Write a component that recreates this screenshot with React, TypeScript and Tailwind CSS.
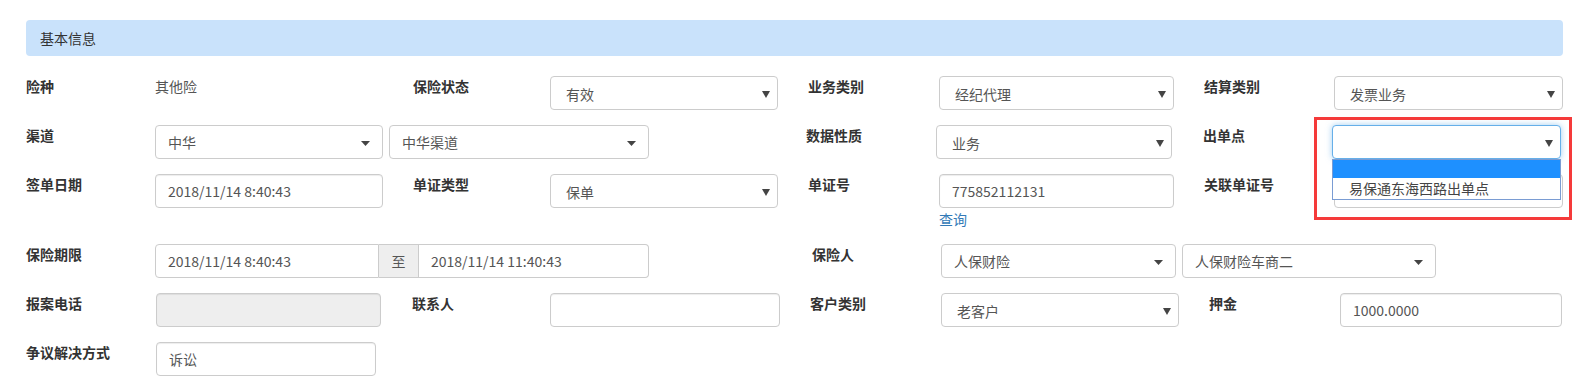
import React from 'react';

const font = { fontFamily: '"Noto Sans CJK SC", "Open Sans", sans-serif' };

function Label({ text, className = '' }: { text: string; className?: string }) {
  return <div className={`shrink-0 text-[14px] leading-[20px] font-bold text-[#333] ${className}`}>{text}</div>;
}

function NativeArrow() {
  return (
    <svg width="8" height="7" viewBox="0 0 8 7" className="absolute right-[7px] top-[14px]">
      <path d="M0 0 L8 0 L4 7 Z" fill="#444" />
    </svg>
  );
}

function Caret() {
  return (
    <svg width="9" height="5" viewBox="0 0 9 5" className="absolute right-[12px] top-[15px]">
      <path d="M0 0 L9 0 L4.5 5 Z" fill="#444" />
    </svg>
  );
}

function Select({ value, className = '', caret = false }: { value: string; className?: string; caret?: boolean }) {
  return (
    <div className={`relative shrink-0 h-[34px] rounded-[4px] border border-[#ccc] bg-white flex items-center text-[14px] text-[#555] ${caret ? 'pl-[12px]' : 'pl-[15px] pt-[2px]'} ${className}`}>
      <span>{value}</span>
      {caret ? <Caret /> : <NativeArrow />}
    </div>
  );
}

function Input({ value = '', className = '', disabled = false }: { value?: string; className?: string; disabled?: boolean }) {
  return (
    <div className={`shrink-0 h-[34px] rounded-[4px] border border-[#ccc] flex items-center pl-[12px] text-[14px] text-[#555] shadow-[inset_0_1px_1px_rgba(0,0,0,0.075)] ${disabled ? 'bg-[#eee]' : 'bg-white'} ${className}`}>
      {value}
    </div>
  );
}

export default function App() {
  return (
    <div className="w-[1589px] h-[386px] bg-white pt-[20px] pl-[26px] overflow-hidden" style={font}>
      <div className="w-[1537px] h-[36px] rounded-[4px] bg-[#c9e2fb] flex items-center pl-[14px] text-[14px] text-[#333]">基本信息</div>

      <div className="flex flex-col gap-[15px] mt-[20px]">
        {/* row 1 */}
        <div className="flex items-start h-[34px]">
          <Label text="险种" className="w-[129px]" />
          <div className="w-[258px] shrink-0 text-[14px] leading-[20px] text-[#555]">其他险</div>
          <Label text="保险状态" className="w-[137px]" />
          <Select value="有效" className="w-[228px]" />
          <Label text="业务类别" className="w-[131px] ml-[30px]" />
          <Select value="经纪代理" className="w-[235px]" />
          <Label text="结算类别" className="w-[130px] ml-[30px]" />
          <Select value="发票业务" className="w-[229px]" />
        </div>

        {/* row 2 */}
        <div className="flex items-start h-[34px]">
          <Label text="渠道" className="w-[129px]" />
          <Select value="中华" caret className="w-[228px]" />
          <Select value="中华渠道" caret className="w-[260px] ml-[6px]" />
          <Label text="数据性质" className="w-[130px] ml-[157px]" />
          <Select value="业务" className="w-[236px]" />
          <Label text="出单点" className="w-[129px] ml-[31px]" />
          <div className="relative shrink-0 w-[229px] h-[34px]">
            <div className="relative h-[34px] rounded-[4px] border border-[#66afe9] bg-white shadow-[0_0_6px_rgba(102,175,233,0.6)]">
              <NativeArrow />
            </div>
            <div className="absolute left-0 top-[34px] w-[229px] z-10 border border-[#7a9cd3] bg-white">
              <div className="h-[18px] bg-[#1e90ff]" />
              <div className="h-[21px] pl-[16px] text-[14px] leading-[21px] text-[#444]">易保通东海西路出单点</div>
            </div>
            <div className="absolute -left-[18px] -top-[8px] w-[258px] h-[103px] border-[3px] border-[#f53a3a] z-20 pointer-events-none" />
          </div>
        </div>

        {/* row 3 */}
        <div className="flex items-start">
          <Label text="签单日期" className="w-[129px]" />
          <Input value="2018/11/14 8:40:43" className="w-[228px]" />
          <Label text="单证类型" className="w-[137px] ml-[30px]" />
          <Select value="保单" className="w-[228px]" />
          <Label text="单证号" className="w-[131px] ml-[30px]" />
          <div className="shrink-0 w-[235px]">
            <Input value="775852112131" className="w-[235px]" />
            <div className="text-[14px] leading-[20px] text-[#337ab7] mt-[1px]">查询</div>
          </div>
          <Label text="关联单证号" className="w-[130px] ml-[30px]" />
          <Input className="w-[229px]" />
        </div>

        {/* row 4 */}
        <div className="flex items-start h-[34px]">
          <Label text="保险期限" className="w-[129px]" />
          <div className="shrink-0 w-[494px] h-[34px] flex text-[14px] text-[#555]">
            <div className="w-[224px] h-[34px] rounded-l-[4px] border border-[#ccc] flex items-center pl-[12px]">2018/11/14 8:40:43</div>
            <div className="w-[40px] h-[34px] border-y border-[#ccc] border-r bg-[#eee] flex items-center justify-center">至</div>
            <div className="flex-1 h-[34px] rounded-r-[4px] border-y border-r border-[#ccc] flex items-center pl-[12px]">2018/11/14 11:40:43</div>
          </div>
          <Label text="保险人" className="w-[129px] ml-[163px]" />
          <Select value="人保财险" caret className="w-[235px]" />
          <Select value="人保财险车商二" caret className="w-[254px] ml-[6px]" />
        </div>

        {/* row 5 */}
        <div className="flex items-start h-[34px]">
          <Label text="报案电话" className="w-[130px]" />
          <Input disabled className="w-[225px]" />
          <Label text="联系人" className="w-[138px] ml-[31px]" />
          <Input className="w-[230px]" />
          <Label text="客户类别" className="w-[131px] ml-[30px]" />
          <Select value="老客户" className="w-[238px]" />
          <Label text="押金" className="w-[131px] ml-[30px]" />
          <Input value="1000.0000" className="w-[222px]" />
        </div>

        {/* row 6 */}
        <div className="flex items-start h-[34px]">
          <Label text="争议解决方式" className="w-[130px]" />
          <Input value="诉讼" className="w-[220px]" />
        </div>
      </div>
    </div>
  );
}
